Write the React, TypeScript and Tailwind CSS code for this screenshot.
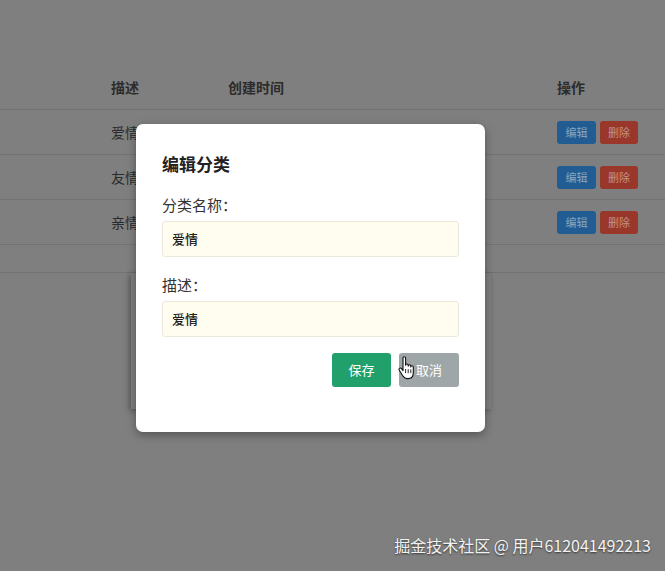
import React from "react";

const rows = ["爱情", "友情", "亲情"];

const HandCursor = () => (
  <svg
    aria-hidden
    width="18"
    height="24"
    viewBox="0 0 18 24"
    className="absolute left-[398px] top-[356px]"
  >
    <path
      d="M5 2.2c0-.9.6-1.4 1.3-1.4s1.3.5 1.3 1.4v7.1c0-.8.6-1.3 1.3-1.3s1.3.5 1.3 1.3v.8c0-.8.6-1.3 1.3-1.3s1.3.5 1.3 1.3v.9c0-.8.6-1.2 1.2-1.2.7 0 1.3.5 1.3 1.3v5.6c0 3.4-2 5.900-5.3 5.9H9.1c-1.9 0-3-.9-4.1-2.4L1.3 14.3c-.5-.7-.4-1.5.2-1.900.6-.5 1.4-.4 2 .3L5 14.6V2.2z"
      fill="#fff"
      stroke="#111"
      strokeWidth="1.1"
      strokeLinejoin="round"
    />
    <path d="M7.6 13v4.2M10.2 13.2v4M12.8 13.4v3.8" stroke="#111" strokeWidth="0.9" />
  </svg>
);

export default function App() {
  return (
    <div
      className="relative h-[571px] w-[665px] overflow-hidden bg-[#7f7f7f]"
      style={{ fontFamily: '"Noto Sans CJK SC", "Noto Sans", sans-serif' }}
    >
      {/* dimmed table behind the overlay */}
      <div className="pt-[66px] text-[14px] text-[#2c2c2c]">
        <div className="grid h-[44px] grid-cols-[111px_117px_329px_1fr] items-center border-b border-[#727272] font-bold">
          <span />
          <span>描述</span>
          <span>创建时间</span>
          <span>操作</span>
        </div>
        {rows.map((r) => (
          <div
            key={r}
            className="grid h-[45px] grid-cols-[111px_117px_329px_1fr] items-center border-b border-[#727272]"
          >
            <span />
            <span>{r}</span>
            <span />
            <span className="flex gap-[4px]">
              <span className="flex h-[23px] w-[39px] items-center justify-center rounded-[3px] bg-[#215d92] text-[11px] text-[#8aa5bd]">
                编辑
              </span>
              <span className="flex h-[23px] w-[38px] items-center justify-center rounded-[3px] bg-[#98372a] text-[11px] text-[#c4928a]">
                删除
              </span>
            </span>
          </div>
        ))}
        <div className="h-[28px] border-b border-[#727272]" />
        <div className="ml-[131px] h-[136px] w-[360px] shadow-[-2px_2px_6px_rgba(0,0,0,0.3)]" />
      </div>

      {/* modal */}
      <div className="absolute left-[136px] top-[124px] flex h-[308px] w-[349px] flex-col rounded-[7px] bg-white px-[26px] pt-[28px] shadow-[0_3px_10px_rgba(0,0,0,0.35)]">
        <h3 className="text-[17px] font-bold leading-[24px] text-[#222]">编辑分类</h3>
        <label className="mt-[18px] text-[15px] leading-[22px] text-[#333]">分类名称：</label>
        <div className="mt-[5px] flex h-[36px] items-center rounded-[3px] border border-[#ebe9dc] bg-[#fffdf0] pl-[9px] text-[13px] font-medium text-[#222]">
          爱情
        </div>
        <label className="mt-[17px] text-[15px] leading-[22px] text-[#333]">描述：</label>
        <div className="mt-[5px] flex h-[36px] items-center rounded-[3px] border border-[#ebe9dc] bg-[#fffdf0] pl-[9px] text-[13px] font-medium text-[#222]">
          爱情
        </div>
        <div className="mt-[16px] flex justify-end gap-[8px]">
          <span className="flex h-[34px] w-[59px] items-center justify-center rounded-[3px] bg-[#22a06b] text-[13px] text-white">
            保存
          </span>
          <span className="flex h-[34px] w-[60px] items-center justify-center rounded-[3px] bg-[#9ea6a8] text-[13px] text-white">
            取消
          </span>
        </div>
      </div>

      <HandCursor />

      <div className="absolute right-[14px] top-[533px] text-[16px] text-[#f2f2f2] [text-shadow:0_1px_2px_rgba(0,0,0,0.6)]">
        掘金技术社区 @ 用户612041492213
      </div>
    </div>
  );
}
